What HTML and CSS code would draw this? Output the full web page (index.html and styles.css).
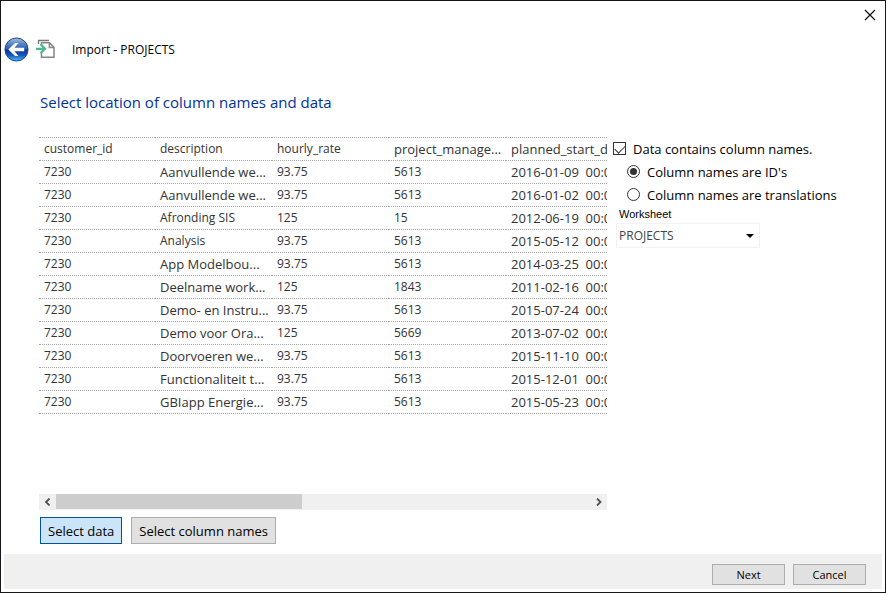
FILE: index.html
```html
<!DOCTYPE html>
<html lang="en">
<head>
<meta charset="utf-8">
<meta name="viewport" content="width=device-width, initial-scale=1">
<title>Import - PROJECTS</title>
<link rel="stylesheet" href="styles.css">
</head>
<body>
<div class="dialog">
  <header class="titlebar">
    <button class="close" type="button" aria-label="Close">
      <svg width="12" height="12" viewBox="0 0 12 12"><path d="M1 1l10 10M11 1L1 11" stroke="#111" stroke-width="1.2" fill="none"/></svg>
    </button>
  </header>
  <div class="nav">
    <button class="back" type="button" aria-label="Back">
      <svg width="25" height="25" viewBox="0 0 26 26">
        <defs>
          <linearGradient id="ball" x1="0" y1="0" x2="0" y2="1">
            <stop offset="0" stop-color="#a9bfe0"/>
            <stop offset=".25" stop-color="#5b86c6"/>
            <stop offset=".48" stop-color="#2a5db0"/>
            <stop offset=".52" stop-color="#0b3390"/>
            <stop offset=".75" stop-color="#1658bd"/>
            <stop offset="1" stop-color="#4cc4ff"/>
          </linearGradient>
        </defs>
        <circle cx="13" cy="13" r="12" fill="url(#ball)" stroke="#1c4283" stroke-width="1"/>
        <path d="M4.500 13L11.500 6.300H15L11 11.200H21V14.800H11L15 19.700H11.500Z" fill="#fff"/>
      </svg>
    </button>
    <svg class="import-icon" width="20" height="20" viewBox="0 0 20 20">
      <path d="M2.500 5V1.500H13" fill="none" stroke="#777" stroke-width="1.300"/>
      <path d="M5.500 6V3.700H13.500L18 8.200V18.300H5.500V14" fill="#fff" stroke="#858585" stroke-width="1.500"/>
      <path d="M13.300 4V8.500H18" fill="none" stroke="#858585" stroke-width="1.300"/>
      <path d="M0 9.800H8M4.500 5.300L9 9.800L4.500 14.300" fill="none" stroke="#4db88c" stroke-width="2.300"/>
    </svg>
    <span class="nav-title">Import - PROJECTS</span>
  </div>
  <main class="content">
    <h1>Select location of column names and data</h1>
    <div class="columns">
      <section class="preview">
        <div class="table-view">
          <table>
            <thead>
              <tr><th class="first">customer_id</th><th>description</th><th>hourly_rate</th><th class="wide">project_manage...</th><th class="wide">planned_start_date</th></tr>
            </thead>
            <tbody>
              <tr><td>7230</td><td class="wide">Aanvullende we...</td><td>93.75</td><td>5613</td><td class="wide">2016-01-09  00:00:00</td></tr>
              <tr><td>7230</td><td class="wide">Aanvullende we...</td><td>93.75</td><td>5613</td><td class="wide">2016-01-02  00:00:00</td></tr>
              <tr><td>7230</td><td>Afronding SIS</td><td>125</td><td>15</td><td class="wide">2012-06-19  00:00:00</td></tr>
              <tr><td>7230</td><td>Analysis</td><td>93.75</td><td>5613</td><td class="wide">2015-05-12  00:00:00</td></tr>
              <tr><td>7230</td><td class="wide">App Modelbou...</td><td>93.75</td><td>5613</td><td class="wide">2014-03-25  00:00:00</td></tr>
              <tr><td>7230</td><td class="wide">Deelname work...</td><td>125</td><td>1843</td><td class="wide">2011-02-16  00:00:00</td></tr>
              <tr><td>7230</td><td class="wide">Demo- en Instru...</td><td>93.75</td><td>5613</td><td class="wide">2015-07-24  00:00:00</td></tr>
              <tr><td>7230</td><td class="wide">Demo voor Ora...</td><td>125</td><td>5669</td><td class="wide">2013-07-02  00:00:00</td></tr>
              <tr><td>7230</td><td class="wide">Doorvoeren we...</td><td>93.75</td><td>5613</td><td class="wide">2015-11-10  00:00:00</td></tr>
              <tr><td>7230</td><td class="wide">Functionaliteit t...</td><td>93.75</td><td>5613</td><td class="wide">2015-12-01  00:00:00</td></tr>
              <tr><td>7230</td><td class="wide">GBIapp Energie...</td><td>93.75</td><td>5613</td><td class="wide">2015-05-23  00:00:00</td></tr>
            </tbody>
          </table>
        </div>
        <div class="scrollbar">
          <button type="button" aria-label="Scroll left"><svg width="8" height="8" viewBox="0 0 8 8"><path d="M5.500 .5L2 4L5.500 7.500" fill="none" stroke="#505050" stroke-width="1.800"/></svg></button>
          <div class="track"><div class="thumb"></div></div>
          <button type="button" aria-label="Scroll right"><svg width="8" height="8" viewBox="0 0 8 8"><path d="M2 .5L5.500 4L2 7.500" fill="none" stroke="#505050" stroke-width="1.800"/></svg></button>
        </div>
        <div class="actions">
          <button class="btn large active" type="button">Select data</button>
          <button class="btn large" type="button">Select column names</button>
        </div>
      </section>
      <section class="options">
        <label class="option"><input type="checkbox" checked>Data contains column names.</label>
        <label class="option nested"><input type="radio" name="kind" checked>Column names are ID's</label>
        <label class="option nested"><input type="radio" name="kind">Column names are translations</label>
        <label class="field-label" for="sheet">Worksheet</label>
        <div class="select">
          <select id="sheet"><option>PROJECTS</option></select>
          <svg width="8" height="4" viewBox="0 0 8 4"><path d="M0 0H8L4 4Z" fill="#000"/></svg>
        </div>
      </section>
    </div>
  </main>
  <footer class="footer">
    <button class="btn" type="button">Next</button>
    <button class="btn" type="button">Cancel</button>
  </footer>
</div>
</body>
</html>
```
FILE: styles.css
```css
* { box-sizing: border-box; }

body {
  margin: 0;
  font-family: "Open Sans", "Noto Sans", sans-serif;
  font-size: 12px;
  color: #000;
  background: #fff;
}

button {
  font-family: inherit;
  color: inherit;
}

.dialog {
  display: flex;
  flex-direction: column;
  min-height: 100vh;
  padding: 0 3px 3px;
  border: 1px solid #17151a;
}

.titlebar {
  display: flex;
  justify-content: flex-end;
  height: 28px;
}

.close, .back, .scrollbar button {
  display: flex;
  align-items: center;
  justify-content: center;
  padding: 0;
  border: 0;
  background: none;
}

.close { width: 24px; }

.nav {
  display: flex;
  align-items: center;
  height: 40px;
}

.import-icon { margin: 0 16px 0 7px; }

.content {
  display: flex;
  flex-direction: column;
  flex: 1;
  padding: 20px 0 10px 35px;
}

h1 {
  margin: 0;
  padding-left: 1px;
  font-size: 15px;
  line-height: 26px;
  font-weight: 400;
  color: #003399;
}

.columns {
  display: flex;
  flex: 1;
  gap: 6px;
  padding-top: 22px;
}

.preview {
  display: flex;
  flex-direction: column;
  flex: 568 1 0;
  min-width: 0;
}

.table-view {
  flex: 1;
  overflow: hidden;
}

table {
  width: 584px;
  table-layout: fixed;
  border-collapse: collapse;
  color: #333;
}

tr { border-bottom: 1px dotted #a8a8a8; }

thead tr { border-top: 1px dotted #a8a8a8; }

th, td {
  height: 23px;
  padding: 0 0 0 5px;
  font-weight: 400;
  line-height: 20px;
  text-align: left;
  white-space: pre;
}

.first { width: 116px; }

.wide { font-size: 13px; }

.scrollbar {
  display: flex;
  height: 16px;
  background: #f0f0f0;
}

.scrollbar button { width: 17px; }

.track { flex: 1; }

.thumb {
  width: 46%;
  height: 15px;
  background: #cdcdcd;
}

.actions {
  display: flex;
  gap: 9px;
  padding: 7px 0 0 1px;
}

.btn {
  width: 73px;
  height: 21px;
  padding: 0;
  border: 1px solid #adadad;
  background: #e1e1e1;
  font-size: 11px;
}

.btn.large {
  width: auto;
  height: 27px;
  padding: 0 7px;
  font-size: 13px;
}

.btn.active {
  border-color: #005499;
  background: #cce4f7;
}

.options {
  display: flex;
  flex-direction: column;
  align-items: flex-start;
  flex: 269 1 0;
}

.option {
  display: flex;
  align-items: center;
  gap: 7px;
  height: 23px;
  font-size: 13px;
  white-space: nowrap;
}

.nested { padding-left: 14px; }

.option input {
  display: grid;
  place-items: center;
  width: 13px;
  height: 13px;
  margin: 0;
  border: 1px solid #333;
  background: #fff;
  appearance: none;
}

.option input[type="radio"] { border-radius: 50%; }

.option input[type="radio"]:checked::before {
  content: "";
  width: 7px;
  height: 7px;
  border-radius: 50%;
  background: #333;
}

.option input[type="checkbox"]:checked::before {
  content: "";
  width: 9px;
  height: 5px;
  margin-top: -2px;
  border: solid #333;
  border-width: 0 0 1px 1px;
  transform: rotate(-45deg);
}

.field-label {
  padding-left: 6px;
  font-family: "Liberation Sans", sans-serif;
  font-size: 11px;
  line-height: 17px;
}

.select {
  display: flex;
  align-items: center;
  width: 144px;
  height: 25px;
  margin-left: 3px;
  border: 1px solid #f2f2f2;
}

.select select {
  flex: 1;
  height: 100%;
  padding: 0 0 0 2px;
  border: 0;
  background: none;
  font: inherit;
  color: #444;
  appearance: none;
}

.select svg { margin-right: 5px; }

.footer {
  display: flex;
  justify-content: flex-end;
  gap: 8px;
  padding: 10px 16px 4px;
  background: #f0f0f0;
}
```
